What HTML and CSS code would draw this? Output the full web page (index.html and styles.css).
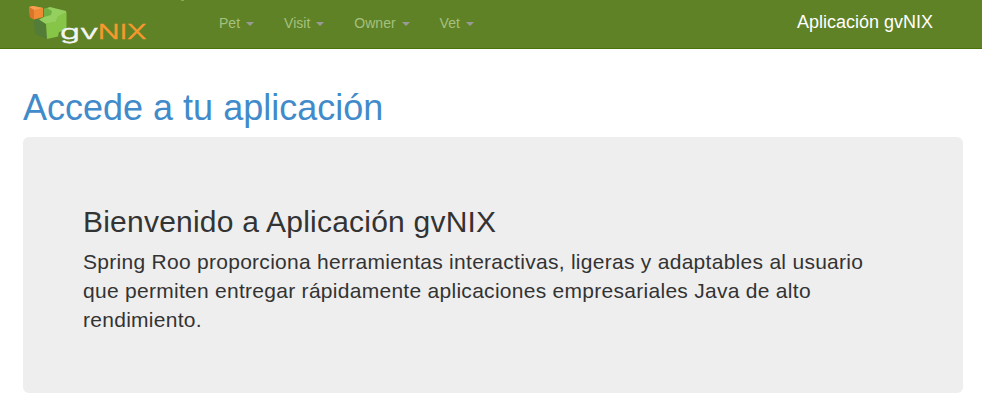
FILE: index.html
```html
<!DOCTYPE html>
<html lang="es">
<head>
<meta charset="utf-8">
<title>Aplicación gvNIX</title>
<link rel="stylesheet" href="styles.css">
</head>
<body>
<header class="navbar">
  <a class="logo" aria-label="gvNIX">
    <svg width="160" height="48" viewBox="28 0 160 48">
      <path d="M33.5 18 46 22 47 39 35 34Z" fill="#527c37"/>
      <path d="M44 9 50 7 66 11 66 13 58 17 56 22 46 24 39 19.5 44 17Z" fill="#95cf60"/>
      <path d="M46 23.500 56 21.500 57.500 16.500 66.500 12 66.500 30 59 32 58 36.500 47 39Z" fill="#86c548"/>
      <path d="M44 9 47 8 52 11 51 15 44 17Z" fill="#70af43"/>
      <path d="M29 7 33 6 43 8 43 17 34 19.500 30 17Z" fill="#f08a35"/>
      <path d="M29 7 33 6 43 8 34 10Z" fill="#f6a052"/>
      <path d="M29 7 34 10 34 19.500 30 17Z" fill="#d9742b"/>
      <text class="logo-gv" x="60" y="38.5" textLength="38.500" lengthAdjust="spacingAndGlyphs">gv</text>
      <text class="logo-nix" x="97.8" y="38.7" textLength="48.500" lengthAdjust="spacingAndGlyphs">NIX</text>
      <path d="M181 0H184V1H181Z" fill="#8ba65b"/>
    </svg>
  </a>
  <nav class="menu">
    <a>Pet <b class="caret"></b></a>
    <a>Visit <b class="caret"></b></a>
    <a>Owner <b class="caret"></b></a>
    <a>Vet <b class="caret"></b></a>
  </nav>
  <span class="brand">Aplicación gvNIX</span>
</header>
<main class="content">
  <h1>Accede a tu aplicación</h1>
  <section class="jumbotron">
    <h2>Bienvenido a Aplicación gvNIX</h2>
    <p>Spring Roo proporciona herramientas interactivas, ligeras y adaptables al usuario que permiten entregar rápidamente aplicaciones empresariales Java de alto rendimiento.</p>
  </section>
</main>
</body>
</html>
```
FILE: styles.css
```css
* { box-sizing: border-box; }
body { margin: 0; background: #fff; color: #333; font: 14px/20px "Liberation Sans", Arial, sans-serif; overflow: hidden; }
.navbar { display: flex; height: 49px; background: #608226; border-bottom: 1px solid #4b7408; }
.logo { width: 188px; padding-left: 28px; }
.logo svg { display: block; }
.logo-gv, .logo-nix { font: 300 19px Inter, sans-serif; fill: #f4f4f4; stroke: #f4f4f4; stroke-width: .5; }
.logo-nix { font-size: 20.5px; fill: #f7992e; stroke: #f7992e; }
.menu { display: flex; margin-left: 16px; }
.menu a { padding: 13px 15px; color: #a4c17e; letter-spacing: .03px; }
.caret { display: inline-block; margin-left: 2px; vertical-align: middle; border: 4px solid transparent; border-top-color: #999; border-bottom: 0; }
.brand { margin-left: auto; padding: 12px 49px 0 0; color: #fff; font-size: 18px; }
.content { padding: 39px 19px 0 23px; }
h1 { margin: 0 0 9px; color: #428bca; font-size: 36px; line-height: 40px; font-weight: 400; }
.jumbotron { height: 256px; padding: 68px 60px 0; border-radius: 6px; background: #eee; }
h2 { margin: 0 0 9px; font-size: 30px; line-height: 33px; font-weight: 400; letter-spacing: .22px; }
p { margin: 0; font-size: 21px; line-height: 29px; letter-spacing: .28px; }
```
